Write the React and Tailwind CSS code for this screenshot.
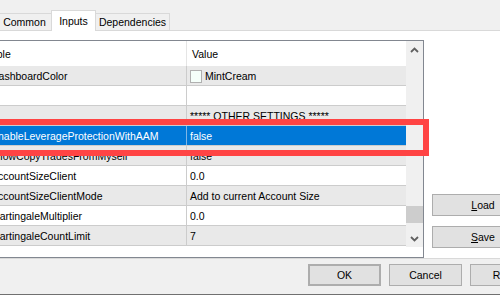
import React from 'react';

const rows = [
  { name: 'DashboardColor', value: 'MintCream', swatch: true, tone: 'gray' },
  { name: '', value: '', tone: 'white' },
  { name: '', value: '***** OTHER SETTINGS *****', tone: 'gray' },
  { name: 'EnableLeverageProtectionWithAAM', value: 'false', tone: 'selected' },
  { name: 'AllowCopyTradesFromMyself', value: 'false', tone: 'gray' },
  { name: 'AccountSizeClient', value: '0.0', tone: 'white' },
  { name: 'AccountSizeClientMode', value: 'Add to current Account Size', tone: 'gray' },
  { name: 'MartingaleMultiplier', value: '0.0', tone: 'white' },
  { name: 'MartingaleCountLimit', value: '7', tone: 'gray' },
];

const toneClass = {
  gray: 'bg-[#e9e9e9] text-black',
  white: 'bg-white text-black',
  selected: 'bg-[#0078d7] text-white',
};

const Chevron = ({ down }) => (
  <svg width="9" height="6" viewBox="0 0 9 6">
    <path
      d={down ? 'M1 1 L4.5 4.5 L8 1' : 'M1 5 L4.5 1.5 L8 5'}
      fill="none"
      stroke="#606060"
      strokeWidth="1.8"
    />
  </svg>
);

const Button = ({ children, className = '' }) => (
  <div
    className={`h-[22px] flex items-center justify-center bg-[#e1e1e1] border border-[#adadad] text-black ${className}`}
  >
    {children}
  </div>
);

const App = () => {
  return (
    <div
      className="relative w-[500px] h-[295px] overflow-hidden bg-[#f0f0f0] text-[10.5px] leading-none"
      style={{ fontFamily: '"Liberation Sans", Arial, sans-serif' }}
    >
      <div className="ml-[-32px] w-[600px] flex flex-col">
        {/* tabs */}
        <div className="h-[30px] flex items-end pl-[29px]">
          <div className="w-[55px] h-[17px] border border-b-0 border-[#d9d9d9] bg-[#f0f0f0] flex items-center justify-center pt-px">
            Common
          </div>
          <div className="relative z-10 w-[45px] h-[21px] -mb-px -ml-px border border-b-0 border-[#d9d9d9] bg-white flex items-start pt-[5px] justify-center">
            Inputs
          </div>
          <div className="w-[75px] h-[17px] -ml-px border border-b-0 border-[#d9d9d9] bg-[#f0f0f0] flex items-center justify-center pt-px">
            Dependencies
          </div>
        </div>

        {/* tab page */}
        <div className="h-[228px] bg-white border-t border-[#d9d9d9] pt-[9px] flex">
          <div className="w-[456px] border border-[#828790] flex">
            <div className="w-[437px] h-[206px] flex flex-col">
              <div className="h-[25px] flex bg-white">
                <div className="w-[218px] border-r border-[#e5e5e5] flex items-center pl-[4px] pt-px">Variable</div>
                <div className="flex-1 flex items-center pl-[5px] pt-px">Value</div>
              </div>
              {rows.map((r, i) => (
                <div key={i} className={`h-[20px] flex border-b border-[#cccccc] ${toneClass[r.tone]}`}>
                  <div
                    className={`w-[218px] border-r flex items-center pl-[22px] pt-px whitespace-nowrap ${
                      r.tone === 'selected' ? 'border-[#7fb6e6]' : 'border-[#cccccc]'
                    }`}
                  >
                    {r.name}
                  </div>
                  <div className="flex-1 flex items-center pl-[3px] pt-px gap-[3px] whitespace-nowrap">
                    {r.swatch && <span className="w-[12px] h-[13px] border border-[#b0b0b0] bg-[#f5fffa]" />}
                    {r.value}
                  </div>
                </div>
              ))}
            </div>
            <div className="w-[17px] h-[206px] bg-[#f0f0f0] flex flex-col">
              <div className="h-[17px] flex items-center justify-center">
                <Chevron />
              </div>
              <div className="h-[148px]" />
              <div className="h-[17px] bg-[#cdcdcd]" />
              <div className="h-[7px]" />
              <div className="h-[17px] flex items-center justify-center">
                <Chevron down />
              </div>
            </div>
          </div>
          <div className="ml-[8px] flex flex-col justify-end gap-[10px] pb-[10px]">
            <Button className="w-[102px]">
              <span><span className="underline">L</span>oad</span>
            </Button>
            <Button className="w-[102px]">
              <span><span className="underline">S</span>ave</span>
            </Button>
          </div>
        </div>

        {/* bottom bar */}
        <div className="h-[37px] border-t border-[#d9d9d9] border-b border-b-[#707070] flex items-start pt-[5px] pl-[340px] gap-[8px]">
          <Button className="w-[73px] border-2 border-[#0078d7]">OK</Button>
          <Button className="w-[73px]">Cancel</Button>
          <Button className="w-[73px]">Reset</Button>
        </div>
      </div>

      {/* highlight box */}
      <div className="absolute top-[119px] left-[-10px] w-[439px] h-[37px] border-[6px] border-[#ff4444]" />
    </div>
  );
};

export default App;
